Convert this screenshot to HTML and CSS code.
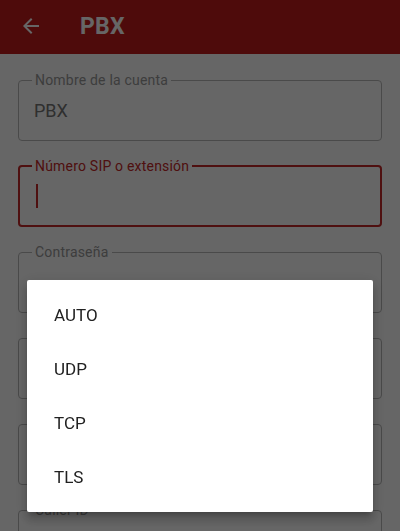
FILE: index.html
```html
<!DOCTYPE html>
<html lang="es">
<head>
  <meta charset="UTF-8">
  <title>PBX</title>
  <link rel="stylesheet" href="styles.css">
</head>
<body>

<header class="appbar">
  <button class="back" aria-label="Atrás">
    <svg viewBox="0 0 24 24" width="24" height="24"><path d="M20 11H7.83l5.59-5.59L12 4l-8 8 8 8 1.41-1.41L7.83 13H20v-2z" fill="currentColor"/></svg>
  </button>
  <h1 class="title">PBX</h1>
</header>

<main class="form">
  <fieldset class="field">
    <legend>Nombre de la cuenta</legend>
    <div class="input">PBX</div>
  </fieldset>

  <fieldset class="field focused">
    <legend>Número SIP o extensión</legend>
    <div class="input"><span class="caret"></span></div>
  </fieldset>

  <fieldset class="field">
    <legend>Contraseña</legend>
    <div class="input"></div>
  </fieldset>

  <fieldset class="field">
    <legend>Dominio</legend>
    <div class="input"></div>
  </fieldset>

  <fieldset class="field">
    <legend>Transporte</legend>
    <div class="input"></div>
  </fieldset>

  <fieldset class="field">
    <legend>Caller ID</legend>
    <div class="input"></div>
  </fieldset>
</main>

<div class="scrim"></div>

<ul class="menu">
  <li>AUTO</li>
  <li>UDP</li>
  <li>TCP</li>
  <li>TLS</li>
</ul>

</body>
</html>
```

FILE: styles.css
```css
body {
  margin: 0;
  height: 531px;
  overflow: hidden;
  font-family: Roboto, 'Noto Sans', sans-serif;
  background: #fff;
}

.appbar {
  height: 54px;
  box-sizing: border-box;
  padding: 0 0 2px 19px;
  display: flex;
  align-items: center;
  background: #c41c1c;
  color: #fff;
}

.back {
  width: 24px;
  height: 24px;
  padding: 0;
  border: none;
  background: none;
  color: inherit;
  display: flex;
}

.title {
  margin: 0 0 0 37px;
  font-size: 23px;
  font-weight: 700;
  letter-spacing: 0.2px;
}

.form {
  padding-top: 18px;
}

.field {
  margin: 0 18px 17px;
  padding: 0 13px 8px;
  border: 1px solid #b8b8b8;
  border-radius: 4px;
  min-inline-size: 0;
}

.field legend {
  padding: 0 3px;
  font-size: 14px;
  line-height: 16px;
  letter-spacing: 0.2px;
  color: #999;
}

.input {
  height: 44px;
  padding-left: 2px;
  display: flex;
  align-items: center;
  font-size: 18px;
  color: #757575;
}

.field.focused {
  border: 2px solid #c62828;
  padding: 0 12px 7px;
}

.field.focused legend {
  color: #c62828;
}

.caret {
  width: 2px;
  height: 24px;
  margin-left: 2px;
  background: #c62828;
}

.scrim {
  position: fixed;
  inset: 0;
  background: rgba(0, 0, 0, 0.6);
}

.menu {
  position: fixed;
  left: 27px;
  top: 280px;
  width: 346px;
  margin: 0;
  padding: 8px 0;
  list-style: none;
  background: #fff;
  border-radius: 2px;
  box-shadow: 0 5px 5px -3px rgba(0,0,0,0.2), 0 8px 10px 1px rgba(0,0,0,0.14), 0 3px 14px 2px rgba(0,0,0,0.12);
}

.menu li {
  height: 54px;
  padding-left: 27px;
  display: flex;
  align-items: center;
  font-size: 17px;
  color: #212121;
}
```
